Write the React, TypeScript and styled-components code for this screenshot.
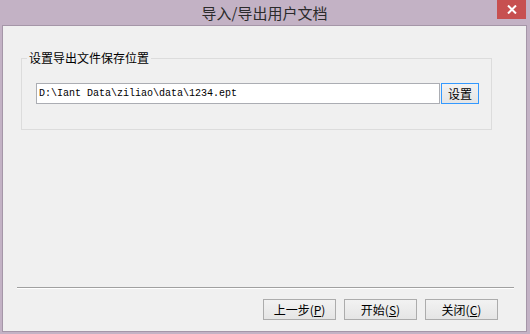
import React, { useState } from "react";
import styled, { createGlobalStyle } from "styled-components";

const GlobalStyle = createGlobalStyle`
    html, body {
        margin: 0;
        padding: 0;
        background: #c3b2c5;
    }
    * {
        box-sizing: border-box;
    }
`;

const cjk = `"Noto Sans CJK SC", "Noto Sans", sans-serif`;

const Window = styled.div`
    position: relative;
    width: 530px;
    height: 334px;
    background: #c3b2c5;
    display: flex;
    flex-direction: column;
    padding: 0 3px 2px 2px;
`;

const TitleBar = styled.div`
    height: 25px;
    display: flex;
    align-items: center;
    justify-content: center;
    font-family: ${cjk};
    font-size: 15px;
    color: #2b2b2b;
    padding-bottom: 1px;
`;

const CloseButton = styled.button`
    position: absolute;
    top: 0;
    right: 4px;
    width: 29px;
    height: 19px;
    border: none;
    padding: 0;
    background: #c75050;
    display: flex;
    align-items: center;
    justify-content: center;
    cursor: pointer;
`;

const Client = styled.div`
    flex: 1;
    background: #f0f0f0;
    border: 1px solid #a596a8;
    display: flex;
    flex-direction: column;
`;

const GroupBox = styled.fieldset`
    margin: 24px 34px 0 18px;
    padding: 17px 12px 25px 14px;
    border: 1px solid #dcdcdc;
    min-width: 0;
    display: flex;
`;

const Legend = styled.legend`
    margin-left: -9px;
    padding: 0 2px;
    font-family: ${cjk};
    font-size: 12px;
    line-height: 16px;
    color: #000;
`;

const PathInput = styled.input`
    flex: 1;
    min-width: 0;
    height: 21px;
    margin: 0;
    padding: 0 2px;
    border: 1px solid #abadb3;
    background: #fff;
    font-family: "Liberation Mono", monospace;
    font-size: 10px;
    color: #000;
    outline: none;
`;

const Button = styled.button<{ $focused?: boolean }>`
    height: 21px;
    margin: 0;
    padding: 0;
    border: 1px solid ${(p) => (p.$focused ? "#3399ff" : "#acacac")};
    background: linear-gradient(#f2f2f2, #e5e5e5);
    font-family: ${cjk};
    font-size: 12px;
    color: #000;
    display: flex;
    align-items: center;
    justify-content: center;
    cursor: pointer;
`;

const SetButton = styled(Button)`
    width: 38px;
    margin-left: 1px;
`;

const Spacer = styled.div`
    flex: 1;
`;

const Separator = styled.div`
    height: 2px;
    margin: 0 12px 0 14px;
    border-top: 1px solid #a0a0a0;
    border-bottom: 1px solid #ffffff;
`;

const ButtonRow = styled.div`
    display: flex;
    justify-content: flex-end;
    gap: 8px;
    padding: 10px 28px 11px 0;
`;

const FooterButton = styled(Button)`
    width: 73px;
`;

const Key = styled.span`
    text-decoration: underline;
`;

const App: React.FC = () => {
    const [path, setPath] = useState<string>("D:\\Iant Data\\ziliao\\data\\1234.ept");

    return (
        <>
            <GlobalStyle />
            <Window>
                <TitleBar>导入/导出用户文档</TitleBar>
                <CloseButton aria-label="关闭">
                    <svg width="10" height="9" viewBox="0 0 10 9">
                        <path d="M1 0.5 L9 8.5 M9 0.5 L1 8.5" stroke="#fff" strokeWidth="2" />
                    </svg>
                </CloseButton>
                <Client>
                    <GroupBox>
                        <Legend>设置导出文件保存位置</Legend>
                        <PathInput value={path} onChange={(e) => setPath(e.target.value)} />
                        <SetButton $focused>设置</SetButton>
                    </GroupBox>
                    <Spacer />
                    <Separator />
                    <ButtonRow>
                        <FooterButton>
                            上一步(<Key>P</Key>)
                        </FooterButton>
                        <FooterButton>
                            开始(<Key>S</Key>)
                        </FooterButton>
                        <FooterButton>
                            关闭(<Key>C</Key>)
                        </FooterButton>
                    </ButtonRow>
                </Client>
            </Window>
        </>
    );
};

export default App;
